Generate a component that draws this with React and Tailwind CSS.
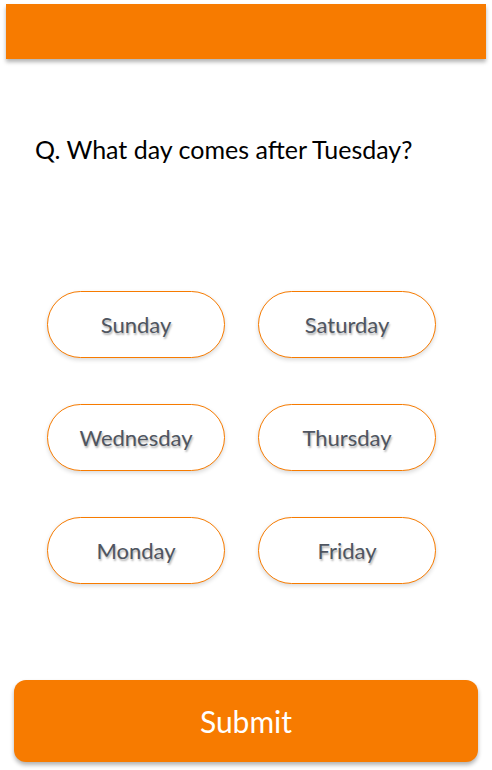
import React, { useState } from "react";

const options = ["Sunday", "Saturday", "Wednesday", "Thursday", "Monday", "Friday"];

const App = () => {
  const [selected, setSelected] = useState(null);

  return (
    <div
      className="w-[492px] h-[770px] bg-white flex flex-col"
      style={{ fontFamily: '"Lato", "Open Sans", sans-serif' }}
    >
      {/* top bar */}
      <div className="mt-[4px] mx-[6px] h-[55px] bg-[#f77b00] shadow-[0_3px_4px_rgba(0,0,0,0.3)]" />

      {/* question */}
      <div className="mt-[75px] pl-[35px] text-[25px] leading-[30px] text-black">
        Q. What day comes after Tuesday?
      </div>

      {/* options */}
      <div className="mt-[127px] ml-[47px] grid grid-cols-[178px_178px] gap-x-[33px] gap-y-[46px]">
        {options.map((opt) => (
          <button
            key={opt}
            onClick={() => setSelected(opt)}
            className={`h-[67px] rounded-full border border-[#f77b00] shadow-[0_2px_4px_rgba(0,0,0,0.15)] text-[22px] text-[#4f5560] [text-shadow:1px_2px_2px_rgba(0,0,0,0.3)] ${
              selected === opt ? "bg-orange-50" : "bg-white"
            }`}
          >
            {opt}
          </button>
        ))}
      </div>

      {/* submit */}
      <button className="mt-auto mb-[8px] mx-[14px] h-[82px] rounded-[12px] bg-[#f77b00] text-white text-[30px] shadow-[0_3px_4px_rgba(0,0,0,0.3)]">
        Submit
      </button>
    </div>
  );
};

export default App;
